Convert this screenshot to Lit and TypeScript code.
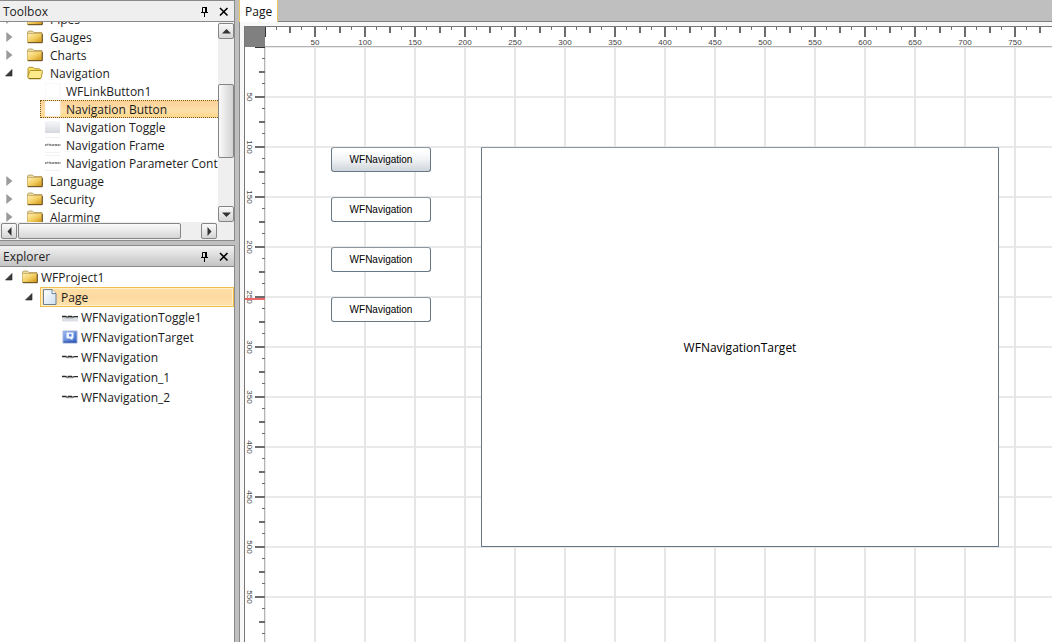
import { LitElement, html, svg, css } from "lit";
import { customElement } from "lit/decorators.js";
import { classMap } from "lit/directives/class-map.js";

type Icon = "folder" | "open" | "page" | "blank" | "shade" | "script" | "toggle" | "target" | "wave";
interface Row {
  label: string;
  icon: Icon;
  level: number;
  state?: "open" | "closed";
  selected?: boolean;
}

const TOOLS: Row[] = [
  { label: "Pipes", icon: "folder", level: 0, state: "closed" },
  { label: "Gauges", icon: "folder", level: 0, state: "closed" },
  { label: "Charts", icon: "folder", level: 0, state: "closed" },
  { label: "Navigation", icon: "open", level: 0, state: "open" },
  { label: "WFLinkButton1", icon: "blank", level: 1 },
  { label: "Navigation Button", icon: "blank", level: 1, selected: true },
  { label: "Navigation Toggle", icon: "shade", level: 1 },
  { label: "Navigation Frame", icon: "script", level: 1 },
  { label: "Navigation Parameter Conta", icon: "script", level: 1 },
  { label: "Language", icon: "folder", level: 0, state: "closed" },
  { label: "Security", icon: "folder", level: 0, state: "closed" },
  { label: "Alarming", icon: "folder", level: 0, state: "closed" },
];

const PROJECT: Row[] = [
  { label: "WFProject1", icon: "folder", level: 0, state: "open" },
  { label: "Page", icon: "page", level: 1, state: "open", selected: true },
  { label: "WFNavigationToggle1", icon: "toggle", level: 2 },
  { label: "WFNavigationTarget", icon: "target", level: 2 },
  { label: "WFNavigation", icon: "wave", level: 2 },
  { label: "WFNavigation_1", icon: "wave", level: 2 },
  { label: "WFNavigation_2", icon: "wave", level: 2 },
];

const scribble = svg`<path d="M0 7.500h4.500M4.500 8.200h2M6 7.500h4M9.500 8.200h2M11.500 7.700h4.500" stroke="#2c2c2c" stroke-width="1.300" fill="none"/><path d="M4 8.800h7" stroke="#888" stroke-width=".8"/>`;

const GLYPHS: Record<Icon, unknown> = {
  folder: svg`
    <defs><linearGradient id="f" x1="0" y1="0" x2="1" y2="1">
      <stop offset="0" stop-color="#fdf0b4"/><stop offset=".5" stop-color="#f3cf63"/><stop offset="1" stop-color="#d0900f"/>
    </linearGradient></defs>
    <path d="M.5 4.500V3L1.500 2h4L7 3.500h8V5H.5z" fill="#e9dca6" stroke="#a48a45" stroke-width=".7"/>
    <path d="M.5 4.500h14.500v9H.5z" fill="url(#f)" stroke="#c9a350" stroke-width=".7"/>
    <path d="M.8 13.700h14.500V5" stroke="#5e4718" fill="none"/>`,
  open: svg`
    <path d="M1 12V3.500L2 2.300h4L7.500 3.800H12.500l1 1V7" fill="#f7dd62" stroke="#a8881a" stroke-width=".9"/>
    <path d="M2.500 6.500q.3-1 1.200-1h11q1 0 .8 1l-1.300 6q-.3 1.200-1.300 1.200H2.500Q.8 13.500.8 12z" fill="#fbe98a" stroke="#a8881a" stroke-width=".9"/>
    <path d="M2 13.600h11.500" stroke="#8f7010"/>`,
  page: svg`
    <defs><linearGradient id="p" x1="0" y1="0" x2="1" y2="1">
      <stop offset="0" stop-color="#fff"/><stop offset="1" stop-color="#cfdff0"/>
    </linearGradient></defs>
    <path d="M1.500 .6h8.500L14 4.500v11H1.500z" fill="url(#p)" stroke="#5d7488" stroke-width=".9"/>
    <path d="M10 .6v4h4" fill="#fff" stroke="#5d7488" stroke-width=".9"/>`,
  blank: svg`<path d="M0 0h15v15H0z" fill="#fff" stroke="#f4f4f4"/>`,
  shade: svg`
    <defs><linearGradient id="s" x1="0" y1="0" x2="0" y2="1">
      <stop offset="0" stop-color="#f7f8fa"/><stop offset="1" stop-color="#d5d8de"/>
    </linearGradient></defs><path d="M0 2h15v12H0z" fill="url(#s)"/>`,
  script: svg`<path d="M0 .5h15M0 15.500h15" stroke="#f2f2f2"/><path d="M0 8h2M2 7.600h3.500M5 8.200h3M8 7.900h3M10.500 8h5" stroke="#8b8b8b" stroke-width="1.800" stroke-dasharray="1.600 .4" fill="none"/>`,
  toggle: svg`<path d="M0 7h16v5.500H0z" fill="#dcdfe6"/>${scribble}`,
  target: svg`
    <defs><linearGradient id="t" x1="0" y1="0" x2="1" y2="1">
      <stop offset="0" stop-color="#9db9f0"/><stop offset="1" stop-color="#2f5fc4"/>
    </linearGradient></defs>
    <path d="M1 2h14v12H1z" fill="url(#t)" stroke="#9fb0dc"/>
    <path d="M4.500 3.500h7v6H10l.8 1.800L7.500 9.500h-3z" fill="#f2f7ff"/>
    <path d="M7 5h2.500v2.500H7z" fill="#5b84dc"/><path d="M1.500 13h13" stroke="#2d4f9c"/>`,
  wave: scribble,
};

const icon = (name: Icon) => html`<svg class="icon" viewBox="0 0 16 16" aria-hidden="true">${GLYPHS[name]}</svg>`;

@customElement("tree-list")
class TreeList extends LitElement {
  static properties = { rows: { attribute: false }, variant: {} };
  declare rows: Row[];
  declare variant: string;

  static styles = css`
    :host { display: block; }
    ul { margin: 0; padding: 0; list-style: none; font-size: 12px; color: #1c1c1c; }
    li { display: flex; align-items: center; height: 20px; white-space: nowrap; }
    .label { display: flex; flex: 1; align-items: center; gap: 3px; height: 100%; box-sizing: border-box; padding-left: 1px; border: 1px solid transparent; }
    .toggle { flex: none; width: 20px; height: 16px; padding: 0 0 0 4px; border: 0; background: none; display: flex; align-items: center; }
    .toggle svg { width: 10px; height: 10px; }
    .icon { flex: none; width: 16px; height: 16px; }
    .l1 { padding-left: 20px; }
    .l2 { padding-left: 40px; }
    .leaf { width: 20px; flex: none; }
    .selected .label { background: linear-gradient(#fee0a6, #fdd9a0 50%, #fee3ae); border-color: #eebf4e; box-shadow: inset 0 0 0 1px #fff0cc; }
    .tools li { height: 18px; }
    .tools .l0 .label { gap: 7px; padding-left: 6px; }
    .tools .l1 .label { gap: 5px; padding-left: 4px; }
    .tools .selected .label { border: 1px dotted #7a5a18; border-right: 0; box-shadow: none; background: linear-gradient(#fdd09a, #fde0a8 60%, #fdd88c); }
  `;

  render() {
    return html`<ul role="tree" class=${this.variant === "tools" ? "tools" : ""}>
      ${this.rows.map(
        (r) => html`<li role="treeitem" aria-selected=${r.selected ? "true" : "false"}
          class=${classMap({ ["l" + r.level]: true, selected: !!r.selected })}>
          ${r.state
            ? html`<button class="toggle" aria-label=${r.state === "open" ? "Collapse" : "Expand"}>
                <svg viewBox="0 0 10 10">${r.state === "open"
                  ? svg`<path d="M8 1.500V8H1.500z" fill="#3c3c3c" stroke="#222" stroke-width=".6"/>`
                  : svg`<path d="M2.300 0v10L8.500 5z" fill="#9b9b9b"/>`}</svg>
              </button>`
            : html`<span class="leaf"></span>`}
          <span class="label">${icon(r.icon)}<span>${r.label}</span></span>
        </li>`
      )}
    </ul>`;
  }
}

@customElement("tool-panel")
class ToolPanel extends LitElement {
  static properties = { heading: {}, active: { type: Boolean } };
  declare heading: string;
  declare active: boolean;

  static styles = css`
    :host { display: flex; flex-direction: column; min-height: 0; background: #fff; }
    header { display: flex; align-items: center; gap: 6px; height: 20px; flex: none; padding: 0 4px 0 3px; border: solid #8a8a8a; border-width: 1px 0; background: #efefef; }
    header.active { background: linear-gradient(#f2f2f2, #c4c4c4); }
    h2 { flex: 1; margin: 0; font-size: 12px; font-weight: 400; color: #222; }
    button { padding: 0; border: 0; background: none; width: 13px; height: 14px; display: grid; place-items: center; }
    svg { width: 11px; height: 11px; fill: none; stroke: #000; }
  `;

  render() {
    return html`<header class=${this.active ? "active" : ""}>
        <h2>${this.heading}</h2>
        <button aria-label="Pin"><svg viewBox="0 0 11 11"><path d="M3.500 6.500v-5h4M2 6.500h7M5.500 7v4"/><path d="M7 1v5.500" stroke-width="2"/></svg></button>
        <button aria-label="Close"><svg viewBox="0 0 11 11"><path d="M2 2l7.500 7.500M9.500 2L2 9.500" stroke-width="1.600"/></svg></button>
      </header>
      <slot></slot>`;
  }
}

const UNIT = 50;
const range = (n: number) => Array.from({ length: Math.max(0, Math.ceil(n)) }, (_, i) => i);
const ticksFor = (size: number) => range((size / UNIT) * 4);
const labelsFor = (size: number) => range((size - 10) / UNIT - 1).map((i) => (i + 1) * UNIT).filter((n) => n + 8 <= size);
const tickLength = (i: number) => (i % 4 === 0 ? 10 : i % 2 === 0 ? 6 : 3);
const tickWidth = (i: number) => (i % 2 === 0 ? 2 : 1);

@customElement("design-surface")
class DesignSurface extends LitElement {
  static properties = { across: { state: true }, down: { state: true } };
  declare across: number;
  declare down: number;
  private observer?: ResizeObserver;

  constructor() {
    super();
    this.across = 0;
    this.down = 0;
  }

  measure() {
    this.across = Math.max(0, this.clientWidth - 20);
    this.down = Math.max(0, this.clientHeight - 20);
  }

  firstUpdated() {
    this.measure();
    this.observer = new ResizeObserver(() => this.measure());
    this.observer.observe(this);
  }

  disconnectedCallback() {
    super.disconnectedCallback();
    this.observer?.disconnect();
  }

  static styles = css`
    :host { display: grid; grid-template: 20px 1fr / 20px 1fr; min-width: 0; min-height: 0; background: #fff; border: solid #777; border-width: 1px 0 0 1px; overflow: hidden; }
    .corner { background: #808080; }
    .ruler { display: block; width: 100%; height: 100%; min-width: 0; min-height: 0; fill: #444; font-size: 8px; font-family: "Liberation Sans", Arial, sans-serif; overflow: hidden; }
    .tick { fill: #6c6c6c; }
    .zero { fill: #333; }
    .edge { fill: #b4b4b4; }
    .marker { fill: #ee6a6a; }
    .canvas { position: relative; overflow: hidden; min-width: 0; min-height: 0; }
    .grid { position: absolute; inset: 0; width: 100%; height: 100%; }
    .node { position: absolute; box-sizing: border-box; padding: 0; display: grid; place-items: center; background: #fff; color: #000; border: 1px solid #667786; border-top-color: #8d979f; }
    .button { width: 100px; height: 25px; border-radius: 3px; font: 10px "Liberation Sans", Arial, sans-serif; }
    .pressed { background: linear-gradient(#fff 10%, #f1f3f5 50%, #cfd5db); }
    .target { width: 518px; height: 400px; border-radius: 1px; font-size: 12px; }
  `;

  render() {
    const nodes = [100, 150, 200, 250];
    return html`
      <div class="corner"></div>
      <svg class="ruler" aria-label="Horizontal ruler">
        <rect class="edge" x="0" y="19" width="100%" height="1"/>
        ${ticksFor(this.across).map((i) => svg`<rect class=${i ? "tick" : "zero"} x=${Math.floor(i * 12.5) - 1} y="0" width=${tickWidth(i)} height=${tickLength(i)}/>`)}
        ${labelsFor(this.across).map((n) => svg`<text x=${n} y="18" text-anchor="middle">${n}</text>`)}
      </svg>
      <svg class="ruler" aria-label="Vertical ruler">
        <rect class="edge" x="19" y="0" width="1" height="100%"/>
        ${ticksFor(this.down).map((i) => svg`<rect class=${i ? "tick" : "zero"} x=${20 - tickLength(i)} y=${Math.floor(i * 12.5) - 1} width=${tickLength(i)} height=${tickWidth(i)}/>`)}
        ${labelsFor(this.down).map((n) => svg`<text transform="translate(2 ${n}) rotate(90)" text-anchor="middle">${n}</text>`)}
        <rect class="marker" x="0" y="251" width="20" height="2"/>
      </svg>
      <div class="canvas">
        <svg class="grid" aria-hidden="true">
          <defs><pattern id="lines" width="50" height="50" patternUnits="userSpaceOnUse" x="-1" y="-1">
            <path d="M0 0h50v2H0z" fill="#e9e9e9"/><path d="M0 0h2v50H0z" fill="#e6e6e6"/>
          </pattern></defs>
          <rect width="100%" height="100%" fill="url(#lines)"/>
        </svg>
        ${nodes.map((y, i) => html`<button class=${classMap({ node: true, button: true, pressed: i === 0 })} style="left:66px;top:${y}px">WFNavigation</button>`)}
        <div class="node target" style="left:216px;top:100px">WFNavigationTarget</div>
      </div>`;
  }
}

@customElement("app-root")
class AppRoot extends LitElement {
  static styles = css`
    :host { display: grid; grid-template-columns: 235px minmax(0, 1fr); gap: 4px; height: 100vh; overflow: hidden; background: #bfbfbf; font-family: "Open Sans", "Noto Sans", sans-serif; font-size: 12px; }
    aside { display: grid; grid-template-rows: 241px minmax(0, 1fr); gap: 4px; min-height: 0; }
    tool-panel { border-right: 1px solid #8a8a8a; }
    .scroller { flex: 1; min-height: 0; display: grid; grid-template: minmax(0, 1fr) 18px / minmax(0, 1fr) 16px; background: #efefef; border-bottom: 1px solid #8a8a8a; }
    .view { overflow: hidden; background: #fff; }
    .view tree-list { margin-top: -12px; }
    .bar { display: flex; background: #efefef; }
    .bar button, .thumb { box-sizing: border-box; border: 1px solid #858585; border-radius: 2px; padding: 0; display: grid; place-items: center; flex: none; background: linear-gradient(#fafafa, #d6d6d6); }
    .bar button { width: 16px; height: 16px; }
    .bar svg { width: 9px; height: 9px; fill: #333; }
    .v { flex-direction: column; padding-top: 1px; }
    .v .thumb { width: 16px; height: 74px; margin-top: 45px; background: linear-gradient(90deg, #fafafa, #d2d2d2); }
    .v .last { margin-top: auto; }
    .h { padding: 1px 1px 0; gap: 1px; }
    .h .thumb { width: 163px; height: 16px; }
    .h .last { margin-left: auto; }
    main { display: grid; grid-template-rows: 22px minmax(0, 1fr); min-width: 0; min-height: 0; border-left: 1px solid #8a8a8a; }
    nav { display: flex; align-items: stretch; border-bottom: 1px solid #808080; margin-left: -1px; }
    .tab { border: solid #e8c65a; border-width: 0 1px; margin-bottom: -1px; padding: 0 5px; background: #fff; font: inherit; color: #111; }
    .doc { display: grid; padding: 4px 0 0 4px; background: #f8f8f8; min-width: 0; min-height: 0; }
  `;

  render() {
    return html`
      <aside>
        <tool-panel heading="Toolbox">
          <div class="scroller">
            <div class="view"><tree-list variant="tools" .rows=${TOOLS}></tree-list></div>
            <div class="bar v">
              <button aria-label="Scroll up"><svg viewBox="0 0 9 9"><path d="M0 6.500h9L4.500 2z"/></svg></button>
              <div class="thumb"></div>
              <button class="last" aria-label="Scroll down"><svg viewBox="0 0 9 9"><path d="M0 2.500h9L4.500 7z"/></svg></button>
            </div>
            <div class="bar h">
              <button aria-label="Scroll left"><svg viewBox="0 0 9 9"><path d="M6.500 0v9L2.500 4.500z"/></svg></button>
              <div class="thumb"></div>
              <button class="last" aria-label="Scroll right"><svg viewBox="0 0 9 9"><path d="M2.500 0v9l4-4.500z"/></svg></button>
            </div>
          </div>
        </tool-panel>
        <tool-panel heading="Explorer" active>
          <tree-list .rows=${PROJECT}></tree-list>
        </tool-panel>
      </aside>
      <main>
        <nav role="tablist"><button class="tab" role="tab" aria-selected="true">Page</button></nav>
        <div class="doc"><design-surface></design-surface></div>
      </main>`;
  }
}
